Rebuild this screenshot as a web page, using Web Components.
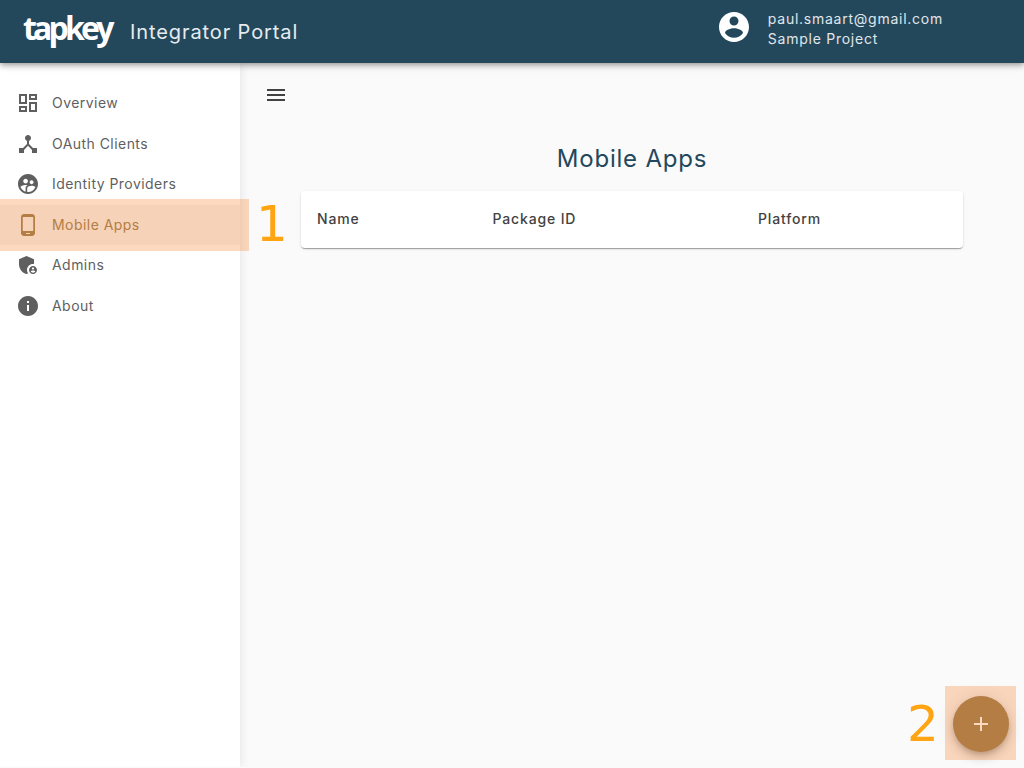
<!DOCTYPE html>
<html>
<head>
<meta charset="utf-8">
<title>Integrator Portal</title>
<style>
  html, body { margin: 0; height: 100%; }
  body { font-family: "Inter", "Open Sans", sans-serif; background: #fafafa; overflow: hidden; }
  tk-app { height: 767px; }
</style>
</head>
<body>
<tk-app>
  <tk-header slot="header" project="Sample Project" email="paul.smaart@gmail.com"></tk-header>
  <tk-nav slot="nav">
    <tk-nav-item icon="dashboard">Overview</tk-nav-item>
    <tk-nav-item icon="hub">OAuth Clients</tk-nav-item>
    <tk-nav-item icon="people">Identity Providers</tk-nav-item>
    <tk-nav-item icon="phone" active>Mobile Apps</tk-nav-item>
    <tk-nav-item icon="admin">Admins</tk-nav-item>
    <tk-nav-item icon="info">About</tk-nav-item>
  </tk-nav>
  <tk-table heading="Mobile Apps" columns="Name,Package ID,Platform"></tk-table>
  <tk-fab slot="fab"></tk-fab>
  <tk-callout slot="callouts" label="1" style="left:0;top:199px;width:249px;height:52px" num-left="256px" num-top="-9px"></tk-callout>
  <tk-callout slot="callouts" label="2" style="left:945px;top:686px;width:71px;height:74px" num-left="-38px" num-top="4px"></tk-callout>
</tk-app>

<script>
const ICONS = {
  menu: '<path d="M3 18h18v-2H3v2zm0-5h18v-2H3v2zm0-7v2h18V6H3z"/>',
  dashboard: '<path d="M19 5v2h-4V5h4M9 5v6H5V5h4m10 8v6h-4v-6h4M9 17v2H5v-2h4M21 3h-8v6h8V3zM11 3H3v10h8V3zm10 8h-8v10h8V11zm-10 4H3v6h8v-6z"/>',
  hub: '<path d="M17 16l-4-4V8.82C14.16 8.4 15 7.3 15 6c0-1.66-1.34-3-3-3S9 4.34 9 6c0 1.3.84 2.4 2 2.82V12l-4 4H3v5h5v-3.05l4-4.2 4 4.2V21h5v-5h-4z"/>',
  people: '<path d="M11.99 2c-5.52 0-10 4.48-10 10s4.48 10 10 10 10-4.48 10-10-4.48-10-10-10zm3.61 6.34c1.07 0 1.93.86 1.93 1.93 0 1.07-.86 1.93-1.93 1.93-1.07 0-1.93-.86-1.93-1.93-.01-1.07.86-1.93 1.93-1.93zm-6-1.58c1.3 0 2.36 1.06 2.36 2.36 0 1.3-1.06 2.36-2.36 2.36s-2.36-1.06-2.36-2.36c0-1.31 1.05-2.36 2.36-2.36zm0 9.13v3.75c-2.4-.75-4.3-2.6-5.14-4.96 1.05-1.12 3.67-1.69 5.14-1.69.53 0 1.2.08 1.9.22-1.64.87-1.9 2.02-1.9 2.68zM11.99 20c-.27 0-.53-.01-.79-.04v-4.07c0-1.42 2.94-2.13 4.4-2.13 1.07 0 2.92.39 3.84 1.15-1.17 2.97-4.06 5.09-7.45 5.09z"/>',
  phone: '<path d="M16 1H8C6.34 1 5 2.34 5 4v16c0 1.66 1.34 3 3 3h8c1.66 0 3-1.34 3-3V4c0-1.66-1.34-3-3-3zm-2 20h-4v-1h4v1zm3.25-3H6.75V4h10.5v14z"/>',
  admin: '<path d="M17 11c.34 0 .67.04 1 .09V6.27L10.5 3 3 6.27v4.91c0 4.54 3.2 8.79 7.5 9.82.55-.13 1.08-.32 1.6-.55C11.41 19.47 11 18.28 11 17c0-3.31 2.69-6 6-6z"/><path d="M17 13c-2.21 0-4 1.79-4 4s1.79 4 4 4 4-1.79 4-4-1.79-4-4-4zm0 1.38c.62 0 1.12.51 1.12 1.12s-.51 1.12-1.12 1.12-1.12-.51-1.12-1.12.5-1.12 1.12-1.12zm0 5.37c-.93 0-1.74-.46-2.24-1.17.05-.72 1.51-1.08 2.24-1.08s2.19.36 2.24 1.08c-.5.71-1.31 1.17-2.24 1.17z"/>',
  info: '<path d="M12 2C6.48 2 2 6.48 2 12s4.48 10 10 10 10-4.48 10-10S17.52 2 12 2zm1 15h-2v-6h2v6zm0-8h-2V7h2v2z"/>',
  account: '<path d="M12 2C6.48 2 2 6.48 2 12s4.48 10 10 10 10-4.48 10-10S17.52 2 12 2zm0 3c1.66 0 3 1.34 3 3s-1.34 3-3 3-3-1.34-3-3 1.34-3 3-3zm0 14.2c-2.5 0-4.71-1.28-6-3.22.03-1.99 4-3.08 6-3.08 1.99 0 5.97 1.09 6 3.08-1.29 1.94-3.5 3.22-6 3.22z"/>',
  plus: '<path d="M19 13h-6v6h-2v-6H5v-2h6V5h2v6h6v2z"/>'
};
const svg = (name, size) => `<svg xmlns="http://www.w3.org/2000/svg" width="${size}" height="${size}" viewBox="0 0 24 24" fill="currentColor">${ICONS[name]}</svg>`;

class TkApp extends HTMLElement {
  constructor() {
    super();
    this.attachShadow({ mode: 'open' }).innerHTML = `
      <style>
        :host { display: grid; grid-template: 63px 1fr / 240px 1fr; position: relative; overflow: hidden; }
        .head { grid-column: 1 / 3; position: relative; z-index: 3; }
        .nav { position: relative; z-index: 2; }
        main { padding: 20px 0 0 0; min-width: 0; }
        button { display: block; border: 0; background: none; color: #424242; padding: 0; margin-left: 24px; height: 24px; }
        svg { display: block; }
        .fab { position: absolute; right: 15px; bottom: 15px; z-index: 4; }
      </style>
      <div class="head"><slot name="header"></slot></div>
      <div class="nav"><slot name="nav"></slot></div>
      <main>
        <button aria-label="menu">${svg('menu', 24)}</button>
        <slot></slot>
      </main>
      <div class="fab"><slot name="fab"></slot></div>
      <slot name="callouts"></slot>`;
  }
}

class TkHeader extends HTMLElement {
  constructor() {
    super();
    this.attachShadow({ mode: 'open' });
  }
  connectedCallback() {
    this.shadowRoot.innerHTML = `
      <style>
        :host { display: flex; align-items: center; height: 63px; background: #23485c; color: #fff; padding: 0 81px 0 23px; box-sizing: border-box; box-shadow: 0 2px 4px -1px rgba(0,0,0,.2), 0 4px 5px rgba(0,0,0,.14), 0 1px 10px rgba(0,0,0,.12); }
        .logo { font: 700 32px/1 "Open Sans", sans-serif; letter-spacing: -3.8px; width: 107px; margin-top: -7px; }
        .title { font: 400 20px/1 "Inter", sans-serif; letter-spacing: .9px; color: #e6ebee; }
        .user { margin-left: auto; display: flex; align-items: center; gap: 16px; }
        .user svg { display: block; margin-top: -9px; }
        .text { font: 400 14px/20px "Inter", sans-serif; letter-spacing: .75px; color: #e0e6ea; margin-top: -6px; }
      </style>
      <span class="logo">tapkey</span>
      <span class="title">Integrator Portal</span>
      <div class="user">
        ${svg('account', 36)}
        <div class="text"><div>${this.getAttribute('email')}</div><div>${this.getAttribute('project')}</div></div>
      </div>`;
  }
}

class TkNav extends HTMLElement {
  constructor() {
    super();
    this.attachShadow({ mode: 'open' }).innerHTML = `
      <style>
        :host { display: block; height: 100%; box-sizing: border-box; padding-top: 20px; background: #fff; box-shadow: 0 0 10px rgba(0,0,0,.1); }
      </style>
      <slot></slot>`;
  }
}

class TkNavItem extends HTMLElement {
  constructor() {
    super();
    this.attachShadow({ mode: 'open' });
  }
  connectedCallback() {
    this.shadowRoot.innerHTML = `
      <style>
        :host { display: flex; align-items: center; height: 40.5px; padding-left: 16px; gap: 12px; color: #5f5f5f; font: 400 14px/1 "Inter", sans-serif; letter-spacing: .45px; }
        :host([active]) { background: #f5f5f5; color: var(--accent, #967b4f); }
      </style>
      ${svg(this.getAttribute('icon'), 24)}
      <slot></slot>`;
  }
}

class TkTable extends HTMLElement {
  constructor() {
    super();
    this.attachShadow({ mode: 'open' });
  }
  connectedCallback() {
    const cols = this.getAttribute('columns').split(',');
    this.shadowRoot.innerHTML = `
      <style>
        :host { display: block; padding: 0 61px; }
        h2 { margin: 0; padding-top: 39px; height: 45px; font: 400 24px/26px "Inter", sans-serif; letter-spacing: .8px; color: #23485c; text-align: center; }
        .card { display: grid; grid-template-columns: 175.5px 265.5px 1fr; align-items: center; height: 57px; box-sizing: border-box; padding: 0 0 2px 16px; background: #fff; border-radius: 4px; box-shadow: 0 2px 1px -1px rgba(0,0,0,.2), 0 1px 1px rgba(0,0,0,.14), 0 1px 3px rgba(0,0,0,.12); font: 450 14px/1 "Inter", sans-serif; letter-spacing: .85px; color: #424242; }
      </style>
      <h2>${this.getAttribute('heading')}</h2>
      <div class="card">${cols.map(c => `<span>${c}</span>`).join('')}</div>`;
  }
}

class TkFab extends HTMLElement {
  constructor() {
    super();
    this.attachShadow({ mode: 'open' }).innerHTML = `
      <style>
        :host { display: flex; align-items: center; justify-content: center; width: 56px; height: 56px; border-radius: 50%; color: #fff; background: var(--accent, #967b4f); box-shadow: 0 3px 5px -1px rgba(0,0,0,.2), 0 6px 10px rgba(0,0,0,.14), 0 1px 18px rgba(0,0,0,.12); }
      </style>
      ${svg('plus', 24)}`;
  }
}

// annotation laid over the screenshot: tinted box plus big number beside it
class TkCallout extends HTMLElement {
  constructor() {
    super();
    this.attachShadow({ mode: 'open' });
  }
  connectedCallback() {
    this.shadowRoot.innerHTML = `
      <style>
        :host { display: block; position: absolute; z-index: 5; background: rgba(248,128,42,.3); }
        span { position: absolute; left: ${this.getAttribute('num-left')}; top: ${this.getAttribute('num-top')}; font: 400 50px/68px "DejaVu Sans", sans-serif; color: #ffa514; }
      </style>
      <span>${this.getAttribute('label')}</span>`;
  }
}

customElements.define('tk-app', TkApp);
customElements.define('tk-header', TkHeader);
customElements.define('tk-nav', TkNav);
customElements.define('tk-nav-item', TkNavItem);
customElements.define('tk-table', TkTable);
customElements.define('tk-fab', TkFab);
customElements.define('tk-callout', TkCallout);
</script>
</body>
</html>
